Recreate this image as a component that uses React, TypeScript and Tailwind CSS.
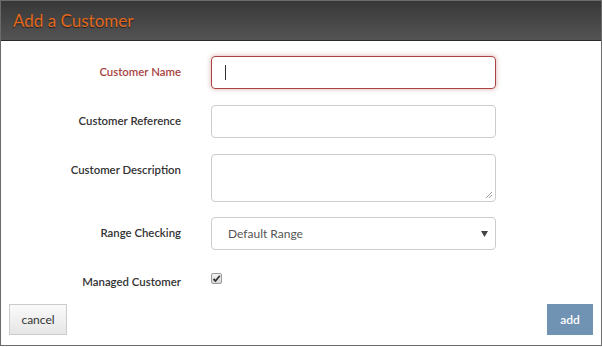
import React from "react";

const font = { fontFamily: "Lato, 'Open Sans', sans-serif" };

function Row({ label, error, children, cls, pt = "pt-[8px]" }: { label: string; error?: boolean; children: React.ReactNode; cls: string; pt?: string }) {
  return (
    <div className={`flex items-start ${cls}`}>
      <div className={`w-[180px] shrink-0 text-right text-[11.4px] font-semibold leading-[15px] ${pt} ${error ? "text-[#a94442]" : "text-[#333]"}`}>
        {label}
      </div>
      <div className="ml-[30px] w-[285px]">{children}</div>
    </div>
  );
}

export default function App() {
  return (
    <div className="w-[602px] h-[346px] bg-white border border-[#6b6b6b] flex flex-col" style={font}>
      <div className="h-[40px] shrink-0 bg-gradient-to-b from-[#383838] to-[#545454] border-b border-[#2a2a2a] flex items-center px-[12px]">
        <span className="text-[17px] text-[#e3691d] leading-none" style={{ textShadow: "0 1px 1px rgba(0,0,0,0.6)" }}>Add a Customer</span>
      </div>
      <div className="flex flex-col pt-[15px]">
        <Row label="Customer Name" error cls="">
          <div className="h-[33px] rounded-[4px] border border-[#a94442] shadow-[0_0_5px_rgba(169,68,66,0.45)] flex items-center pl-[13px]">
            <div className="w-px h-[15px] bg-[#333]" />
          </div>
        </Row>
        <Row label="Customer Reference" cls="mt-[16px]">
          <div className="h-[33px] rounded-[4px] border border-[#ccc]" />
        </Row>
        <Row label="Customer Description" cls="mt-[16px]">
          <div className="h-[48px] rounded-[4px] border border-[#ccc] relative">
            <svg className="absolute right-[2px] bottom-[2px]" width="8" height="8" viewBox="0 0 8 8">
              <line x1="7" y1="1" x2="1" y2="7" stroke="#888" strokeWidth="0.8" />
              <line x1="7" y1="4" x2="4" y2="7" stroke="#888" strokeWidth="0.8" />
            </svg>
          </div>
        </Row>
        <Row label="Range Checking" cls="mt-[15px]">
          <div className="h-[33px] rounded-[4px] border border-[#ccc] flex items-center justify-between pl-[16px] pr-[7px]">
            <span className="text-[12px] text-[#555]">Default Range</span>
            <svg width="7" height="7" viewBox="0 0 7 7"><polygon points="0,1 7,1 3.5,7" fill="#444" /></svg>
          </div>
        </Row>
        <Row label="Managed Customer" cls="mt-[23px]" pt="pt-[1px]">
          <div className="w-[11px] h-[11px] rounded-[2px] border border-[#999] bg-gradient-to-b from-[#f4f4f4] to-[#d8d8d8] flex items-center justify-center">
            <svg width="9" height="9" viewBox="0 0 9 9"><path d="M1.5 5 L3.5 7 L7.8 1.8" fill="none" stroke="#333" strokeWidth="1.8" /></svg>
          </div>
        </Row>
      </div>
      <div className="flex justify-between items-start px-[8px] mt-[15px]">
        <button className="w-[58px] h-[31px] border border-[#ccc] bg-gradient-to-b from-[#fafafa] to-[#e6e6e6] text-[12px] text-[#333]">cancel</button>
        <button className="w-[46px] h-[31px] bg-[#7193b3] text-[12px] font-semibold text-white">add</button>
      </div>
    </div>
  );
}
